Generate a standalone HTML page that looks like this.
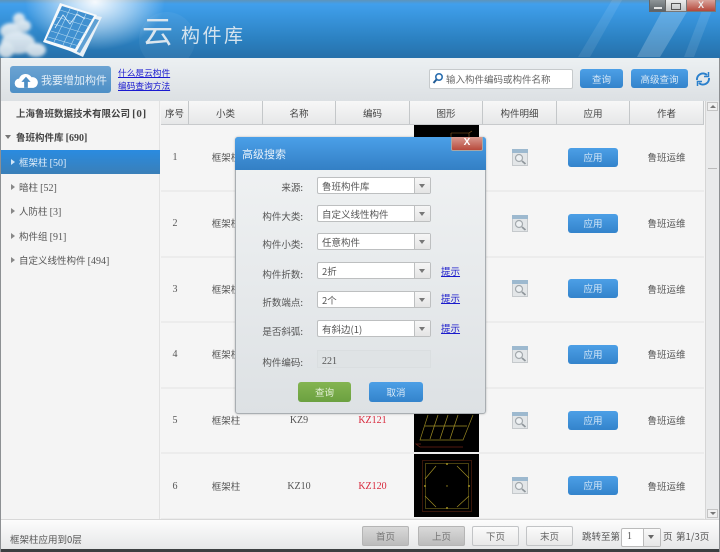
<!DOCTYPE html>
<html><head><meta charset="utf-8">
<style>
html,body{margin:0;padding:0;background:#fff}
#w{position:relative;width:720px;height:552px;overflow:hidden;background:#f5f5f5;font:9.5px/12px "WenQuanYi Zen Hei","Noto Sans CJK SC",sans-serif;color:#555;filter:blur(.3px)}
#w div,#w a,#w svg{position:absolute}
.t{white-space:nowrap;height:12px;line-height:12px}
.c{text-align:center}
.m{font-family:"Liberation Serif",serif;font-size:10px}
.h{top:101px;height:23px;line-height:24px;text-align:center;background:linear-gradient(#f7f7f7,#e6e7e8);border-right:1px solid #c4c7c9;border-bottom:1px solid #c8cacc;color:#444}
.ln{left:161px;width:543px;height:2px;background:#ececec}
.b{background:linear-gradient(#4c9fe6,#3383cb);border-radius:3px;color:#d8e9f7;text-align:center}
.ap{left:568px;width:50px;height:19px;line-height:19px}
.s{left:317px;width:112px;height:15px;line-height:15px;background:#fff;border:1px solid #bdbfc0;border-radius:2px}
.s span{position:absolute;left:4px;top:1px;color:#555}
.ar{right:0;top:0;width:15px;height:15px;background:linear-gradient(#f6f6f6,#e4e4e4);border-left:1px solid #bdbfc0}
.ar:after{content:"";position:absolute;left:4px;top:6px;border:3.5px solid transparent;border-top:4px solid #777;border-bottom:0}
.l{width:60px;left:243px;text-align:right;color:#555}
.k{left:441px;color:#1a1acb;text-decoration:underline;white-space:nowrap}
.p{top:526px;width:45px;height:18px;line-height:18px;text-align:center;border:1px solid #c2c4c6;border-radius:2px;background:linear-gradient(#fbfbfb,#e8e8e8);color:#666}
.g{background:linear-gradient(#d9d9d9,#bcbcbc);border-color:#b5b5b5;color:#777}
</style></head><body>
<div id="w">
<svg width="0" height="0" style="left:0;top:0"><defs><symbol id="mg" viewBox="0 0 16 17"><rect x=".5" y=".5" width="15" height="16" fill="#e3e6e8" stroke="#c5c9cc"/><rect x="0" y="0" width="16" height="4" fill="#9db9cf"/><circle cx="7" cy="9" r="3.500" fill="#eef1f3" stroke="#a3a9ad" stroke-width="1.200"/><path d="M10 12l3.500 3" stroke="#8f969b" stroke-width="1.800"/></symbol></defs></svg>
<!-- banner -->
<div style="left:0;top:0;width:720px;height:58px;background:linear-gradient(#5e94bb 0,#419fec 4px,#3a97e0 14px,#2b80c0 40px,#2771ab 57px)"></div>
<div style="left:0;top:0;width:240px;height:58px;background:radial-gradient(ellipse 70px 48px at 95px 2px,rgba(255,255,255,.95),rgba(255,255,255,.45) 55%,rgba(255,255,255,0))"></div>
<svg style="left:0;top:0" width="720" height="58" viewBox="0 0 720 58">
<defs><linearGradient id="cl" x1="0" y1="0" x2="0" y2="1"><stop offset="0" stop-color="#eef4f8"/><stop offset="1" stop-color="#cdd9e2"/></linearGradient><filter id="sf" x="-20%" y="-20%" width="140%" height="140%"><feGaussianBlur stdDeviation="1.600"/></filter></defs>
<g fill="url(#cl)" filter="url(#sf)" opacity=".92">
<ellipse cx="19" cy="19" rx="6" ry="6"/><ellipse cx="11" cy="31" rx="11" ry="8"/><ellipse cx="24" cy="26" rx="7" ry="6"/><ellipse cx="18" cy="43" rx="17" ry="11"/><ellipse cx="36" cy="50" rx="10" ry="7"/><ellipse cx="6" cy="50" rx="8" ry="8"/>
</g>
<polygon points="46,40 66,10 102,17 83,57" fill="#e8f0f6"/>
<polygon points="50,41 70,12 99,20 80,53" fill="#5ea0d4"/>
<polygon points="43,42 60,3 97,15 76,53" fill="#f6f9fb"/>
<polygon points="46,40 62,6 94,16 75,49" fill="#4090d0"/>
<g stroke="#bfe0f5" stroke-width=".6" fill="none" opacity=".9"><path d="M57 17l33 10M54 24l33 10M51 31l32 10M48 37l31 9M60 10l32 10M70 9L54 42M78 11L63 45M86 14L70 47"/><path d="M55 28l8-13 7 9 7-10 8 5" stroke="#eaf6ff" stroke-width=".8"/></g>
<g fill="#fff"><polygon points="612,0 622,0 590,57 578,57" opacity=".09"/><polygon points="668,0 694,0 660,57 637,57" opacity=".2"/><polygon points="706,0 716,0 694,57 684,57" opacity=".1"/></g>
<circle cx="167" cy="40" r="28" fill="#fff" opacity=".05"/>
</svg>
<div class="t" style="left:142px;top:12px;height:36px;font-size:31px;line-height:36px;color:#dbe6ee;font-family:'Noto Sans CJK SC',sans-serif;font-weight:400">云</div>
<div class="t" style="left:181px;top:23px;height:24px;font-size:19px;line-height:24px;letter-spacing:2.500px;color:#d4e3ee">构件库</div>
<!-- window btns -->
<div style="left:649px;top:0;width:17px;height:12px;background:linear-gradient(#8f9598,#5c6266);border:1px solid #666;border-top:0;box-sizing:border-box"><div style="left:4px;top:7px;width:8px;height:2px;background:#e4e4e4"></div></div>
<div style="left:666px;top:0;width:20px;height:12px;background:linear-gradient(#eceded,#c0c3c4);border-bottom:1px solid #777;box-sizing:border-box"><div style="left:5px;top:3px;width:8px;height:5px;border:1px solid #555"></div></div>
<div style="left:686px;top:0;width:30px;height:12px;background:linear-gradient(#d9a49b,#b5473a);border:1px solid #777;border-top:0;box-sizing:border-box"><div class="t c" style="left:0;top:-1px;width:28px;color:#eee;font:bold 9px/12px 'Liberation Sans',sans-serif">X</div></div>
<!-- toolbar -->
<div style="left:0;top:58px;width:720px;height:43px;background:linear-gradient(#ecf0f2,#dce0e3)"></div>
<div class="b" style="left:10px;top:66px;width:101px;height:27px;background:linear-gradient(#6ba3d2,#4d8fc6)"></div>
<svg style="left:14px;top:71px" width="24" height="19" viewBox="0 0 26 20"><path d="M6 18a5 5 0 0 1-.5-10A7.500 7.500 0 0 1 19 6.500 5.800 5.800 0 0 1 21 18z" fill="#fff"/><path d="M13 6l5 5.500h-3v6.500h-4v-6.500H8z" fill="#4d8fc6"/></svg>
<div class="t" style="left:41px;top:73px;font-size:11px;height:14px;line-height:14px;color:#e3eef7">我要增加构件</div>
<a class="t" style="left:118px;top:67px;color:#1a1ad0;text-decoration:underline;font-size:8.700px">什么是云构件</a>
<a class="t" style="left:118px;top:80px;color:#1a1ad0;text-decoration:underline;font-size:8.700px">编码查询方法</a>
<div style="left:429px;top:69px;width:142px;height:18px;background:#fff;border:1px solid #c6cacc;border-radius:2px"></div>
<svg style="left:432px;top:72px" width="12" height="13" viewBox="0 0 12 13"><circle cx="7" cy="5" r="3.200" fill="none" stroke="#2b6fb0" stroke-width="1.600"/><path d="M4.500 7.500L1.500 11" stroke="#1f5a94" stroke-width="2"/></svg>
<div class="t" style="left:446px;top:73px;color:#666">输入构件编码或构件名称</div>
<div class="b" style="left:580px;top:69px;width:43px;height:19px;line-height:20px">查询</div>
<div class="b" style="left:631px;top:69px;width:57px;height:19px;line-height:20px">高级查询</div>
<svg style="left:695px;top:71px" width="16" height="16" viewBox="0 0 16 16" fill="none" stroke="#2b80cc" stroke-width="2"><path d="M2 9a6 6 0 0 1 10-5"/><path d="M14 7a6 6 0 0 1-10 5"/><path d="M13.500 1v4.500H9" stroke-width="1.500"/><path d="M2.500 15v-4.500H7" stroke-width="1.500"/></svg>
<!-- sidebar -->
<div style="left:0;top:101px;width:160px;height:418px;background:#f4f4f4;border-right:1px solid #e2e2e2;box-sizing:border-box"></div>
<div class="t" style="left:16px;top:107px;color:#444;font-weight:bold">上海鲁班数据技术有限公司 <span class="m" style="font-size:11px;letter-spacing:.6px">[0]</span></div>
<div style="left:5px;top:135px;border:3px solid transparent;border-top:4px solid #777;border-bottom:0"></div>
<div class="t" style="left:16px;top:131px;color:#444;font-weight:bold">鲁班构件库 <span class="m">[690]</span></div>
<div style="left:1px;top:150px;width:159px;height:24px;background:linear-gradient(#2a8be0,#3a7fb8)"></div>
<div style="left:11px;top:159px;border:3px solid transparent;border-left:4px solid #cfe5f7;border-right:0"></div>
<div class="t" style="left:19px;top:156px;color:#e4f0fa">框架柱 <span class="m">[50]</span></div>
<div style="left:11px;top:184px;border:3px solid transparent;border-left:4px solid #888;border-right:0"></div>
<div class="t" style="left:19px;top:181px">暗柱 <span class="m">[52]</span></div>
<div style="left:11px;top:208px;border:3px solid transparent;border-left:4px solid #888;border-right:0"></div>
<div class="t" style="left:19px;top:205px">人防柱 <span class="m">[3]</span></div>
<div style="left:11px;top:233px;border:3px solid transparent;border-left:4px solid #888;border-right:0"></div>
<div class="t" style="left:19px;top:230px">构件组 <span class="m">[91]</span></div>
<div style="left:11px;top:257px;border:3px solid transparent;border-left:4px solid #888;border-right:0"></div>
<div class="t" style="left:19px;top:254px">自定义线性构件 <span class="m">[494]</span></div>
<!-- table head -->
<div class="h" style="left:161px;width:27px">序号</div>
<div class="h" style="left:189px;width:73px">小类</div>
<div class="h" style="left:263px;width:72px">名称</div>
<div class="h" style="left:336px;width:73px">编码</div>
<div class="h" style="left:410px;width:72px">图形</div>
<div class="h" style="left:483px;width:73px">构件明细</div>
<div class="h" style="left:557px;width:72px">应用</div>
<div class="h" style="left:630px;width:73px">作者</div>
<!-- lines -->
<div class="ln" style="top:190px"></div><div class="ln" style="top:256px"></div><div class="ln" style="top:321px"></div><div class="ln" style="top:387px"></div><div class="ln" style="top:452px"></div><div class="ln" style="top:518px"></div>
<!-- images -->
<div style="left:414px;top:125px;width:65px;height:64px;background:#000"></div>
<svg style="left:447px;top:130px" width="30" height="12" viewBox="0 0 30 12" fill="none" stroke="#8f5f24" stroke-width=".6"><path d="M4 3h18v9M4 3v9M22 3l3-2"/></svg>
<div style="left:414px;top:388px;width:65px;height:64px;background:#000"></div>
<svg style="left:414px;top:388px" width="65" height="64" viewBox="0 0 65 64" fill="none" stroke="#948420" stroke-width=".7"><path d="M14 27L6 52h43l10-25"/><path d="M24 27l-8 24M34 27l-8 24M44 27l-8 24M11 38h42" stroke="#a08e24"/><path d="M7 56l-5 0 4 3h43" stroke="#6e2216"/></svg>
<div style="left:414px;top:454px;width:65px;height:63px;background:#000"></div>
<svg style="left:414px;top:454px" width="65" height="63" viewBox="0 0 65 63" fill="none" stroke-width=".5"><rect x="8.500" y="6.500" width="49" height="51" stroke="#6e2a14"/><rect x="11.500" y="9.500" width="43" height="45" stroke="#8f8020"/><path d="M11 25L22 12M43 12L55 24M11 42L22 53M43 53L55 42" stroke="#a08e24" stroke-width=".7"/><g fill="#a08e24"><circle cx="11" cy="32" r="1"/><circle cx="55" cy="32" r="1"/><circle cx="33" cy="10" r="1"/><circle cx="33" cy="54" r="1"/><circle cx="33" cy="32" r=".7"/></g></svg>
<!-- rows -->
<div class="t c m" style="left:161px;width:28px;top:152px">1</div><div class="t c" style="left:190px;width:72px;top:151px">框架柱</div>
<div class="t c m" style="left:161px;width:28px;top:218px">2</div><div class="t c" style="left:190px;width:72px;top:217px">框架柱</div>
<div class="t c m" style="left:161px;width:28px;top:284px">3</div><div class="t c" style="left:190px;width:72px;top:283px">框架柱</div>
<div class="t c m" style="left:161px;width:28px;top:349px">4</div><div class="t c" style="left:190px;width:72px;top:348px">框架柱</div>
<div class="t c m" style="left:161px;width:28px;top:415px">5</div><div class="t c" style="left:190px;width:72px;top:414px">框架柱</div>
<div class="t c m" style="left:263px;width:72px;top:415px">KZ9</div><div class="t c m" style="left:336px;width:73px;top:415px;color:#d8283c">KZ121</div>
<div class="t c m" style="left:161px;width:28px;top:481px">6</div><div class="t c" style="left:190px;width:72px;top:480px">框架柱</div>
<div class="t c m" style="left:263px;width:72px;top:481px">KZ10</div><div class="t c m" style="left:336px;width:73px;top:481px;color:#d8283c">KZ120</div>
<svg style="left:512px;top:149px" width="16" height="17"><use href="#mg"/></svg><div class="b ap" style="top:148px">应用</div><div class="t c" style="left:630px;width:73px;top:151px">鲁班运维</div>
<svg style="left:512px;top:215px" width="16" height="17"><use href="#mg"/></svg><div class="b ap" style="top:214px">应用</div><div class="t c" style="left:630px;width:73px;top:217px">鲁班运维</div>
<svg style="left:512px;top:280px" width="16" height="17"><use href="#mg"/></svg><div class="b ap" style="top:279px">应用</div><div class="t c" style="left:630px;width:73px;top:283px">鲁班运维</div>
<svg style="left:512px;top:346px" width="16" height="17"><use href="#mg"/></svg><div class="b ap" style="top:345px">应用</div><div class="t c" style="left:630px;width:73px;top:348px">鲁班运维</div>
<svg style="left:512px;top:412px" width="16" height="17"><use href="#mg"/></svg><div class="b ap" style="top:411px">应用</div><div class="t c" style="left:630px;width:73px;top:414px">鲁班运维</div>
<svg style="left:512px;top:477px" width="16" height="17"><use href="#mg"/></svg><div class="b ap" style="top:476px">应用</div><div class="t c" style="left:630px;width:73px;top:480px">鲁班运维</div>
<!-- scrollbar -->
<div style="left:705px;top:101px;width:14px;height:418px;background:#e9eaeb;border-left:1px solid #d5d5d5;box-sizing:border-box"></div>
<div style="left:707px;top:102px;width:11px;height:9px;background:#f0f0f0;border:1px solid #c4c4c4;box-sizing:border-box"><div style="left:2px;top:2px;border:3px solid transparent;border-bottom:3px solid #777;border-top:0"></div></div>
<div style="left:707px;top:509px;width:11px;height:9px;background:#f0f0f0;border:1px solid #c4c4c4;box-sizing:border-box"><div style="left:2px;top:2px;border:3px solid transparent;border-top:3px solid #777;border-bottom:0"></div></div>
<div style="left:708px;top:168px;width:9px;height:1px;background:#bbb"></div>
<!-- bottom -->
<div style="left:0;top:519px;width:720px;height:30px;background:linear-gradient(#fcfcfc,#e6e7e8);border-top:1px solid #d8d8d8;box-sizing:border-box"></div>
<div style="left:0;top:549px;width:720px;height:3px;background:#3c3f41"></div>
<div class="t" style="left:10px;top:533px">框架柱应用到0层</div>
<div class="p g" style="left:362px">首页</div><div class="p g" style="left:418px">上页</div><div class="p" style="left:472px">下页</div><div class="p" style="left:526px">末页</div>
<div class="t" style="left:582px;top:530px">跳转至第</div>
<div style="left:621px;top:528px;width:38px;height:17px;background:#fff;border:1px solid #bbb;border-radius:2px"></div>
<div class="t m" style="left:627px;top:531px">1</div>
<div style="left:643px;top:529px;width:16px;height:17px;background:linear-gradient(#f8f8f8,#e6e6e6);border-left:1px solid #bbb"></div>
<div style="left:648px;top:535px;width:0;height:0;border:3.500px solid transparent;border-top:4px solid #666;border-bottom:0"></div>
<div class="t" style="left:663px;top:530px">页</div><div class="t" style="left:676px;top:530px">第1/3页</div>
<!-- edges -->
<div style="left:0;top:58px;width:1px;height:494px;background:#8d9093"></div>
<div style="left:719px;top:58px;width:1px;height:494px;background:#8d9093"></div>
<!-- dialog -->
<div style="left:235px;top:137px;width:251px;height:277px;background:linear-gradient(#f1f3f4,#dde1e4);border:1px solid #a9aeb2;border-radius:3px;box-sizing:border-box;box-shadow:0 0 2px rgba(0,0,0,.25)"></div>
<div style="left:235px;top:137px;width:251px;height:33px;background:linear-gradient(#4a9fe8,#337fc4);border-radius:3px 3px 0 0"></div>
<div class="t" style="left:242px;top:147px;font-size:11px;height:14px;line-height:14px;color:#e6f1fa">高级搜索</div>
<div style="left:451px;top:137px;width:32px;height:14px;background:linear-gradient(#d99a90,#b84a3c);border:1px solid #a7a7a7;border-top:0;border-radius:0 0 2px 2px;box-sizing:border-box"><div class="t c" style="left:0;top:0;width:30px;color:#fff;font:bold 10px/12px 'Liberation Sans',sans-serif">X</div></div>
<div class="t l" style="top:181px">来源:</div><div class="s" style="top:177px"><span>鲁班构件库</span><div class="ar"></div></div>
<div class="t l" style="top:210px">构件大类:</div><div class="s" style="top:205px"><span>自定义线性构件</span><div class="ar"></div></div>
<div class="t l" style="top:238px">构件小类:</div><div class="s" style="top:233px"><span>任意构件</span><div class="ar"></div></div>
<div class="t l" style="top:268px">构件折数:</div><div class="s" style="top:262px"><span>2折</span><div class="ar"></div></div><a class="t k" style="top:265px">提示</a>
<div class="t l" style="top:296px">折数端点:</div><div class="s" style="top:291px"><span>2个</span><div class="ar"></div></div><a class="t k" style="top:292px">提示</a>
<div class="t l" style="top:325px">是否斜弧:</div><div class="s" style="top:320px"><span>有斜边(1)</span><div class="ar"></div></div><a class="t k" style="top:322px">提示</a>
<div class="t l" style="top:356px">构件编码:</div>
<div style="left:317px;top:350px;width:114px;height:18px;background:#dfe3e5;border:1px solid #dadee0;box-sizing:border-box"></div>
<div class="t m" style="left:322px;top:356px">221</div>
<div class="b" style="left:298px;top:382px;width:53px;height:20px;line-height:21px;background:linear-gradient(#84b451,#6ba040);color:#e6f2da">查询</div>
<div class="b" style="left:369px;top:382px;width:54px;height:20px;line-height:21px">取消</div>
</div>
</body></html>
